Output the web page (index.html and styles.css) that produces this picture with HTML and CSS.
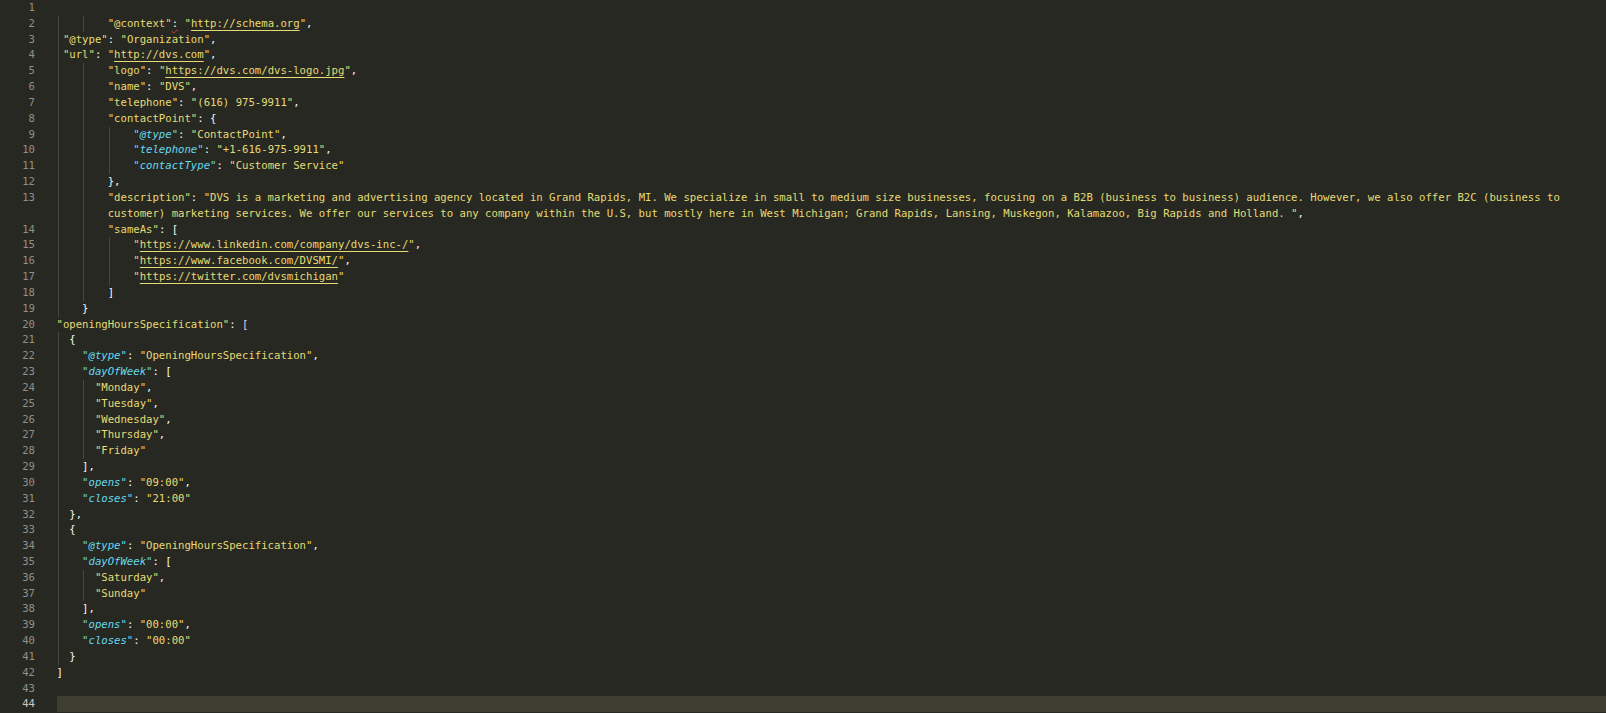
FILE: index.html
```html
<!DOCTYPE html>
<html lang="en">
<head>
<meta charset="UTF-8">
<meta name="viewport" content="width=device-width, initial-scale=1.0">
<title>schema.json</title>
<link rel="stylesheet" href="styles.css">
</head>
<body>
<div class="editor">
    <div class="row"><span class="num">1</span><span class="code"></span></div>
    <div class="row"><span class="num">2</span><span class="code"><span class="g">    </span><span class="g">    </span><span class="s">"@context"</span><span class="warn">:</span> <span class="s">"<span class="url">http://schema.org</span>"</span>,</span></div>
    <div class="row"><span class="num">3</span><span class="code"><span class="g"> </span><span class="s">"@type"</span>: <span class="s">"Organization"</span>,</span></div>
    <div class="row"><span class="num">4</span><span class="code"><span class="g"> </span><span class="s">"url"</span>: <span class="s">"<span class="url">http://dvs.com</span>"</span>,</span></div>
    <div class="row"><span class="num">5</span><span class="code"><span class="g">    </span><span class="g">    </span><span class="s">"logo"</span>: <span class="s">"<span class="url">https://dvs.com/dvs-logo.jpg</span>"</span>,</span></div>
    <div class="row"><span class="num">6</span><span class="code"><span class="g">    </span><span class="g">    </span><span class="s">"name"</span>: <span class="s">"DVS"</span>,</span></div>
    <div class="row"><span class="num">7</span><span class="code"><span class="g">    </span><span class="g">    </span><span class="s">"telephone"</span>: <span class="s">"(616) 975-9911"</span>,</span></div>
    <div class="row"><span class="num">8</span><span class="code"><span class="g">    </span><span class="g">    </span><span class="s">"contactPoint"</span>: {</span></div>
    <div class="row"><span class="num">9</span><span class="code"><span class="g">    </span><span class="g">    </span><span class="g">    </span><span class="k">"@type"</span>: <span class="s">"ContactPoint"</span>,</span></div>
    <div class="row"><span class="num">10</span><span class="code"><span class="g">    </span><span class="g">    </span><span class="g">    </span><span class="k">"telephone"</span>: <span class="s">"+1-616-975-9911"</span>,</span></div>
    <div class="row"><span class="num">11</span><span class="code"><span class="g">    </span><span class="g">    </span><span class="g">    </span><span class="k">"contactType"</span>: <span class="s">"Customer Service"</span></span></div>
    <div class="row"><span class="num">12</span><span class="code"><span class="g">    </span><span class="g">    </span>},</span></div>
    <div class="row"><span class="num">13</span><span class="code"><span class="g">    </span><span class="g">    </span><span class="s">"description"</span>: <span class="s">"DVS is a marketing and advertising agency located in Grand Rapids, MI. We specialize in small to medium size businesses, focusing on a B2B (business to business) audience. However, we also offer B2C (business to</span></span></div>
    <div class="row"><span class="num"></span><span class="code"><span class="g">    </span><span class="g">    </span><span class="s">customer) marketing services. We offer our services to any company within the U.S, but mostly here in West Michigan; Grand Rapids, Lansing, Muskegon, Kalamazoo, Big Rapids and Holland. "</span>,</span></div>
    <div class="row"><span class="num">14</span><span class="code"><span class="g">    </span><span class="g">    </span><span class="s">"sameAs"</span>: [</span></div>
    <div class="row"><span class="num">15</span><span class="code"><span class="g">    </span><span class="g">    </span><span class="g">    </span><span class="s">"<span class="url">https://www.linkedin.com/company/dvs-inc-/</span>"</span>,</span></div>
    <div class="row"><span class="num">16</span><span class="code"><span class="g">    </span><span class="g">    </span><span class="g">    </span><span class="s">"<span class="url">https://www.facebook.com/DVSMI/</span>"</span>,</span></div>
    <div class="row"><span class="num">17</span><span class="code"><span class="g">    </span><span class="g">    </span><span class="g">    </span><span class="s">"<span class="url">https://twitter.com/dvsmichigan</span>"</span></span></div>
    <div class="row"><span class="num">18</span><span class="code"><span class="g">    </span><span class="g">    </span>]</span></div>
    <div class="row"><span class="num">19</span><span class="code"><span class="g">    </span>}</span></div>
    <div class="row"><span class="num">20</span><span class="code"><span class="s">"openingHoursSpecification"</span>: <span class="br">[</span></span></div>
    <div class="row"><span class="num">21</span><span class="code"><span class="g">  </span>{</span></div>
    <div class="row"><span class="num">22</span><span class="code"><span class="g">    </span><span class="k">"@type"</span>: <span class="s">"OpeningHoursSpecification"</span>,</span></div>
    <div class="row"><span class="num">23</span><span class="code"><span class="g">    </span><span class="k">"dayOfWeek"</span>: [</span></div>
    <div class="row"><span class="num">24</span><span class="code"><span class="g">    </span><span class="g">  </span><span class="s">"Monday"</span>,</span></div>
    <div class="row"><span class="num">25</span><span class="code"><span class="g">    </span><span class="g">  </span><span class="s">"Tuesday"</span>,</span></div>
    <div class="row"><span class="num">26</span><span class="code"><span class="g">    </span><span class="g">  </span><span class="s">"Wednesday"</span>,</span></div>
    <div class="row"><span class="num">27</span><span class="code"><span class="g">    </span><span class="g">  </span><span class="s">"Thursday"</span>,</span></div>
    <div class="row"><span class="num">28</span><span class="code"><span class="g">    </span><span class="g">  </span><span class="s">"Friday"</span></span></div>
    <div class="row"><span class="num">29</span><span class="code"><span class="g">    </span>],</span></div>
    <div class="row"><span class="num">30</span><span class="code"><span class="g">    </span><span class="k">"opens"</span>: <span class="s">"09:00"</span>,</span></div>
    <div class="row"><span class="num">31</span><span class="code"><span class="g">    </span><span class="k">"closes"</span>: <span class="s">"21:00"</span></span></div>
    <div class="row"><span class="num">32</span><span class="code"><span class="g">  </span>},</span></div>
    <div class="row"><span class="num">33</span><span class="code"><span class="g">  </span>{</span></div>
    <div class="row"><span class="num">34</span><span class="code"><span class="g">    </span><span class="k">"@type"</span>: <span class="s">"OpeningHoursSpecification"</span>,</span></div>
    <div class="row"><span class="num">35</span><span class="code"><span class="g">    </span><span class="k">"dayOfWeek"</span>: [</span></div>
    <div class="row"><span class="num">36</span><span class="code"><span class="g">    </span><span class="g">  </span><span class="s">"Saturday"</span>,</span></div>
    <div class="row"><span class="num">37</span><span class="code"><span class="g">    </span><span class="g">  </span><span class="s">"Sunday"</span></span></div>
    <div class="row"><span class="num">38</span><span class="code"><span class="g">    </span>],</span></div>
    <div class="row"><span class="num">39</span><span class="code"><span class="g">    </span><span class="k">"opens"</span>: <span class="s">"00:00"</span>,</span></div>
    <div class="row"><span class="num">40</span><span class="code"><span class="g">    </span><span class="k">"closes"</span>: <span class="s">"00:00"</span></span></div>
    <div class="row"><span class="num">41</span><span class="code"><span class="g">  </span>}</span></div>
    <div class="row"><span class="num">42</span><span class="code">]</span></div>
    <div class="row"><span class="num">43</span><span class="code"></span></div>
    <div class="row current"><span class="num">44</span><span class="code"></span></div>
</div>
</body>
</html>
```

FILE: styles.css
```css
body {
    margin: 0;
    background-color: #272822;
    color: #f8f8f2;
    font-family: "DejaVu Sans Mono", "Liberation Mono", monospace;
    font-size: 10.63px;
    line-height: 15.83px;
    overflow: hidden;
}
.editor {
    padding: 0;
}
.row {
    display: flex;
    height: 15.83px;
}
.num {
    flex: none;
    width: 35px;
    text-align: right;
    color: #90908a;
}
.code {
    flex: 1;
    margin-left: 21.5px;
    white-space: pre;
}
.row.current .code {
    background-color: #3e3d32;
}
.row.current .num {
    color: #c8c8c2;
}
/* indent guides */
.g {
    display: inline-block;
    background: linear-gradient(to right, transparent 1px, #474840 1px, #474840 2px, transparent 2px);
}
.s {
    color: #e6db74;
}
.k {
    color: #66d9ef;
    font-style: italic;
}
.url {
    text-decoration: underline;
    text-decoration-color: #e6db74;
    text-decoration-thickness: 1px;
    text-underline-offset: 3px;
}
.warn {
    text-decoration: underline wavy #d23a3a;
    text-decoration-thickness: 1px;
    text-underline-offset: 2px;
}
.br {
    color: #f3cdee;
}
```
